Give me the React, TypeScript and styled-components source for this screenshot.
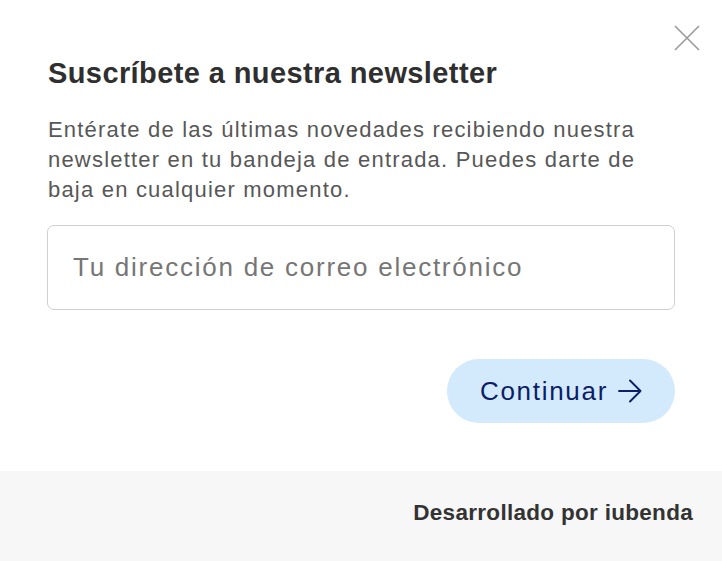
import styled, { createGlobalStyle } from 'styled-components';

const GlobalStyle = createGlobalStyle`
	* {
		box-sizing: border-box;
	}
	body {
		margin: 0;
		background: #ffffff;
		font-family: 'Liberation Sans', Arial, Helvetica, sans-serif;
	}
`;

const NewsletterModal = () => {
	return (
		<Modal>
			<CloseButton aria-label='Cerrar'>
				<svg width='26' height='26' viewBox='0 0 26 26'>
					<path d='M1 1L25 25M25 1L1 25' stroke='#9a9a9a' strokeWidth='1.6' />
				</svg>
			</CloseButton>
			<Content>
				<Title>Suscríbete a nuestra newsletter</Title>
				<Description>
					Entérate de las últimas novedades recibiendo nuestra newsletter en tu bandeja de
					entrada. Puedes darte de baja en cualquier momento.
				</Description>
				<Input type='email' placeholder='Tu dirección de correo electrónico' />
				<Actions>
					<SubmitButton>
						Continuar
						<svg width='24' height='24' viewBox='0 0 24 24' fill='none'>
							<path
								d='M1 12H22.5M12 1.5L22.5 12L12 22.5'
								stroke='currentColor'
								strokeWidth='1.9'
								strokeLinecap='round'
								strokeLinejoin='round'
							/>
						</svg>
					</SubmitButton>
				</Actions>
			</Content>
			<Footer>
				<FooterText>Desarrollado por iubenda</FooterText>
			</Footer>
		</Modal>
	);
};

export default function App() {
	return (
		<>
			<GlobalStyle />
			<NewsletterModal />
		</>
	);
}

const Modal = styled.div`
	position: relative;
	width: 722px;
	height: 561px;
	display: flex;
	flex-direction: column;
	background: #ffffff;
	color: #333333;
`;

const CloseButton = styled.button`
	position: absolute;
	top: 24px;
	right: 21px;
	width: 28px;
	height: 28px;
	padding: 1px;
	border: none;
	background: transparent;
	cursor: pointer;
`;

const Content = styled.div`
	flex: 1;
	padding: 56px 47px 0 47px;
`;

const Title = styled.h2`
	margin: 0 0 0 1px;
	font-size: 29px;
	line-height: 34px;
	letter-spacing: 0.4px;
	font-weight: bold;
	color: #2f2f2f;
`;

const Description = styled.p`
	margin: 25px 0 0 1px;
	font-size: 22px;
	line-height: 30px;
	letter-spacing: 1.2px;
	color: #575757;
`;

const Input = styled.input`
	display: block;
	width: 100%;
	height: 85px;
	margin-top: 20px;
	padding: 0 25px;
	border: 1.5px solid #cfcfcf;
	border-radius: 7px;
	font-family: inherit;
	font-size: 26px;
	letter-spacing: 1.75px;
	color: #333333;
	outline: none;
	&::placeholder {
		color: #767676;
	}
`;

const Actions = styled.div`
	display: flex;
	justify-content: flex-end;
	margin-top: 49px;
`;

const SubmitButton = styled.button`
	display: flex;
	align-items: center;
	gap: 10px;
	height: 64px;
	padding: 0 33px 0 33px;
	border: none;
	border-radius: 32px;
	background: #d3eafc;
	color: #0c1e66;
	font-family: inherit;
	font-size: 26px;
	letter-spacing: 1.7px;
	cursor: pointer;
`;

const Footer = styled.div`
	height: 90px;
	display: flex;
	align-items: center;
	justify-content: flex-end;
	padding: 0 29px 6px 0;
	background: #f7f7f7;
`;

const FooterText = styled.span`
	font-size: 22.5px;
	letter-spacing: 0.3px;
	font-weight: bold;
	color: #333333;
`;
